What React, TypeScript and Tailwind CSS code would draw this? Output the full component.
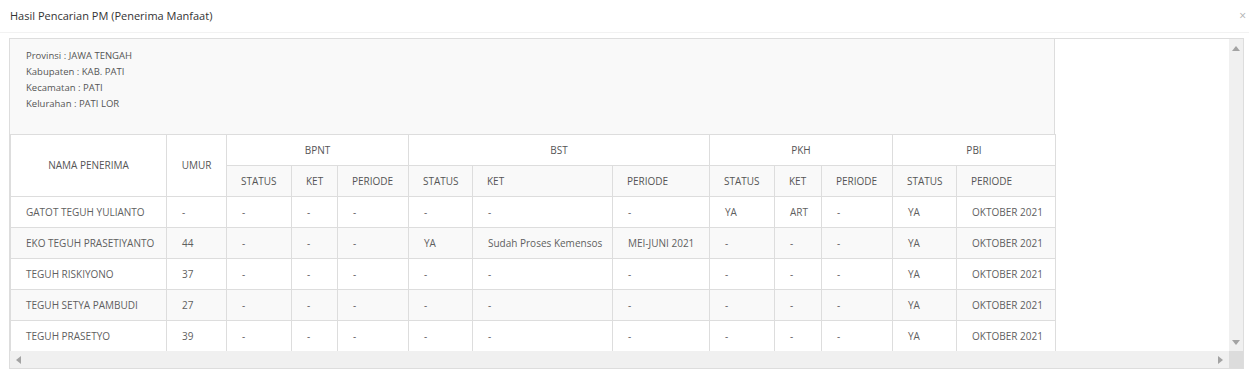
import React from "react";

type Row = {
  nama: string;
  umur: string;
  bpnt: [string, string, string];
  bst: [string, string, string];
  pkh: [string, string, string];
  pbi: [string, string];
};

const rows: Row[] = [
  { nama: "GATOT TEGUH YULIANTO", umur: "-", bpnt: ["-", "-", "-"], bst: ["-", "-", "-"], pkh: ["YA", "ART", "-"], pbi: ["YA", "OKTOBER 2021"] },
  { nama: "EKO TEGUH PRASETIYANTO", umur: "44", bpnt: ["-", "-", "-"], bst: ["YA", "Sudah Proses Kemensos", "MEI-JUNI 2021"], pkh: ["-", "-", "-"], pbi: ["YA", "OKTOBER 2021"] },
  { nama: "TEGUH RISKIYONO", umur: "37", bpnt: ["-", "-", "-"], bst: ["-", "-", "-"], pkh: ["-", "-", "-"], pbi: ["YA", "OKTOBER 2021"] },
  { nama: "TEGUH SETYA PAMBUDI", umur: "27", bpnt: ["-", "-", "-"], bst: ["-", "-", "-"], pkh: ["-", "-", "-"], pbi: ["YA", "OKTOBER 2021"] },
  { nama: "TEGUH PRASETYO", umur: "39", bpnt: ["-", "-", "-"], bst: ["-", "-", "-"], pkh: ["-", "-", "-"], pbi: ["YA", "OKTOBER 2021"] },
];

const colWidths = [156, 60, 65, 46, 71, 64, 140, 97, 65, 47, 71, 64, 99];

const th = "border border-[#dddddd] h-[31px] px-[14px] font-normal text-[10px] text-[#555555] align-middle";
const td = "border border-[#dddddd] h-[31px] px-[15px] text-[10px] text-[#5f5f5f] align-middle whitespace-nowrap";

function Triangle({ dir }: { dir: "up" | "down" | "left" | "right" }) {
  const pts =
    dir === "up"
      ? "0,5 4,0 8,5"
      : dir === "down"
      ? "0,0 8,0 4,5"
      : dir === "left"
      ? "5,0 5,8 0,4"
      : "0,0 0,8 5,4";
  const w = dir === "up" || dir === "down" ? 8 : 5;
  const h = dir === "up" || dir === "down" ? 5 : 8;
  return (
    <svg width={w} height={h} viewBox={`0 0 ${w} ${h}`}>
      <polygon points={pts} fill="#a3a3a3" />
    </svg>
  );
}

export default function App() {
  return (
    <div
      className="w-[1249px] h-[376px] bg-white overflow-hidden"
      style={{ fontFamily: '"Open Sans", "Noto Sans", sans-serif' }}
    >
      {/* dialog header */}
      <div className="h-[33px] flex items-center justify-between pl-[10px] pr-[3px] border-b border-[#f2f2f2]">
        <span className="text-[11px] text-[#333333]">Hasil Pencarian PM (Penerima Manfaat)</span>
        <span className="text-[12px] text-[#b0b0b0] leading-none">×</span>
      </div>

      {/* scrollable result box */}
      <div className="ml-[9px] mt-[5px] w-[1235px] h-[331px] border border-[#dddddd] flex">
        <div className="flex-1 flex flex-col min-w-0">
          <div className="h-[312px] overflow-hidden">
            <div className="w-[1045px]">
              <div className="h-[95px] bg-[#f9f9f9] border-r border-[#dddddd] pl-[16px] pt-[9px] text-[9.5px] leading-[16px] text-[#555555]">
                <div>Provinsi : JAWA TENGAH</div>
                <div>Kabupaten : KAB. PATI</div>
                <div>Kecamatan : PATI</div>
                <div>Kelurahan : PATI LOR</div>
              </div>
              <table className="border-collapse table-fixed w-[1045px]">
                <colgroup>
                  {colWidths.map((w, i) => (
                    <col key={i} style={{ width: w }} />
                  ))}
                </colgroup>
                <thead>
                  <tr className="bg-white">
                    <th rowSpan={2} className={`${th} text-center`}>NAMA PENERIMA</th>
                    <th rowSpan={2} className={`${th} text-center`}>UMUR</th>
                    <th colSpan={3} className={`${th} text-center`}>BPNT</th>
                    <th colSpan={3} className={`${th} text-center`}>BST</th>
                    <th colSpan={3} className={`${th} text-center`}>PKH</th>
                    <th colSpan={2} className={`${th} text-center`}>PBI</th>
                  </tr>
                  <tr className="bg-[#f9f9f9]">
                    {["STATUS", "KET", "PERIODE", "STATUS", "KET", "PERIODE", "STATUS", "KET", "PERIODE", "STATUS", "PERIODE"].map((h, i) => (
                      <th key={i} className={`${th} text-left`}>{h}</th>
                    ))}
                  </tr>
                </thead>
                <tbody>
                  {rows.map((r, i) => (
                    <tr key={i} className={i % 2 === 1 ? "bg-[#f9f9f9]" : "bg-white"}>
                      <td className={td}>{r.nama}</td>
                      <td className={td}>{r.umur}</td>
                      {[...r.bpnt, ...r.bst, ...r.pkh, ...r.pbi].map((v, j) => (
                        <td key={j} className={td}>{v}</td>
                      ))}
                    </tr>
                  ))}
                </tbody>
              </table>
            </div>
          </div>
          {/* horizontal scrollbar */}
          <div className="h-[17px] bg-[#f0f0f0] flex items-center justify-between px-[6px]">
            <Triangle dir="left" />
            <Triangle dir="right" />
          </div>
        </div>
        {/* vertical scrollbar */}
        <div className="w-[14px] bg-[#f0f0f0] flex flex-col">
          <div className="flex-1 flex flex-col items-center justify-between pt-[7px] pb-[6px]">
            <Triangle dir="up" />
            <Triangle dir="down" />
          </div>
          <div className="h-[17px] bg-[#dcdcdc]" />
        </div>
      </div>
    </div>
  );
}
